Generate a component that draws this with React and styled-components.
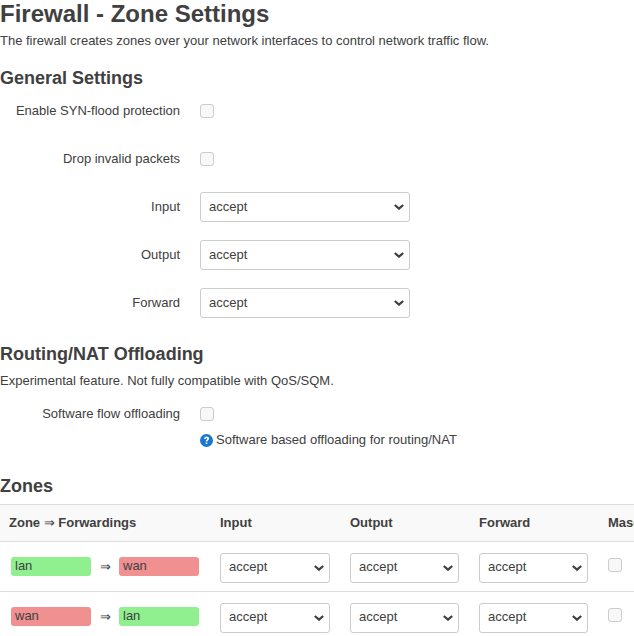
import React from "react";
import styled, { createGlobalStyle } from "styled-components";

const chevron =
  "data:image/svg+xml,%3Csvg xmlns='http://www.w3.org/2000/svg' width='10' height='6' viewBox='0 0 10 6'%3E%3Cpath d='M.8 1L5 4.6 9.2 1' fill='none' stroke='%23404040' stroke-width='2.3'/%3E%3C/svg%3E";

const Global = createGlobalStyle`
  html, body { margin: 0; padding: 0; background: #fff; overflow: hidden; }
  body { font-family: "Liberation Sans", Arial, sans-serif; font-size: 13px; color: #404040; }
`;
const Page = styled.div`
  width: 634px; height: 636px; overflow: hidden;
`;
const Title = styled.h2`
  margin: 0 0 5px; font-size: 24px; line-height: 27px; font-weight: 700; color: #404040;
`;
const Desc = styled.p`
  margin: 0; font-size: 13px; line-height: 18px; color: #404040;
`;
const Heading = styled.h3`
  margin: 0 0 ${p => p.$below || 0}px; font-size: 18px; line-height: 22px; font-weight: 700; color: #404040;
`;
const Section = styled.section`
  display: flex; flex-direction: column; padding-top: ${p => p.$top}px;
`;
const Rows = styled.div`
  display: flex; flex-direction: column; gap: 8px; padding-top: ${p => p.$top}px;
`;
const Row = styled.div`
  display: grid; grid-template-columns: 180px 1fr; column-gap: 20px; align-items: center;
  height: ${p => p.$h || 40}px;
`;
const Label = styled.label`
  text-align: right; font-size: 13px; line-height: 18px;
`;
const Check = styled.input.attrs({ type: "checkbox" })`
  appearance: none; display: block; margin: 0; width: 14px; height: 14px;
  border: 1px solid #ccc; border-radius: 3px; background: #f8f8f8;
`;
const Select = styled.select`
  appearance: none; display: block; box-sizing: border-box; width: ${p => p.$w}px; height: 30px;
  padding: 0 8px 2px; border: 1px solid #ccc; border-radius: 3px; color: #404040;
  background: #fff url("${chevron}") no-repeat right 5px center;
  font-family: "Liberation Sans", Arial, sans-serif; font-size: 13px;
`;
const CellSelect = styled(Select)`
  margin-top: 2px;
`;
const CellCheck = styled(Check)`
  margin-bottom: 4px;
`;
const HintRow = styled.div`
  display: flex; align-items: center; gap: 3px; padding-left: 200px; font-size: 13px; line-height: 18px;
`;
const Table = styled.table`
  border-collapse: collapse; table-layout: fixed; width: 740px; font-size: 13px;
`;
const Head = styled.th`
  box-sizing: border-box; width: ${p => p.$w}px; height: 37px; padding: 0 0 2px 9px;
  text-align: left; font-weight: 700; background: #f9f9f9;
  border-top: 1px solid #ddd; border-bottom: 1px solid #ddd;
`;
const HeadArrow = styled.span`
  font-weight: 400;
`;
const Cell = styled.td`
  box-sizing: border-box; height: 50px; padding: 0 0 0 ${p => p.$pad}px;
  border-bottom: 1px solid #ddd; vertical-align: middle;
`;
const Zones = styled.div`
  display: grid; grid-template-columns: 80px 28px 80px; align-items: center; font-size: 13px;
`;
const Arrow = styled.span`
  text-align: center;
`;
const Pill = styled.span`
  box-sizing: border-box; height: 19px; line-height: 18px; padding-left: 4px;
  border-radius: 3px; background: ${p => (p.$zone === "lan" ? "#90f090" : "#f09090")};
`;

const Hint = () => (
  <svg width="13" height="13" viewBox="0 0 13 13" aria-hidden="true">
    <circle cx="6.5" cy="6.5" r="6.5" fill="#1976d2" />
    <path d="M4 5c.1-1.5 1.1-2.4 2.6-2.4 1.5 0 2.5.9 2.5 2 0 1.7-1.8 1.7-1.8 3H5.7c0-2 1.6-2 1.6-2.9 0-.4-.3-.7-.8-.7-.5 0-.8.4-.9 1z" fill="#fff" />
    <rect x="5.7" y="8.5" width="1.6" height="1.6" fill="#fff" />
  </svg>
);
const Accept = ({ as: Comp = Select, w }) => (
  <Comp $w={w} defaultValue="accept">
    <option>accept</option>
    <option>drop</option>
    <option>reject</option>
  </Comp>
);
const ZoneRow = ({ from, to }) => (
  <tr>
    <Cell $pad={11}>
      <Zones>
        <Pill $zone={from}>{from}</Pill>
        <Arrow>⇒</Arrow>
        <Pill $zone={to}>{to}</Pill>
      </Zones>
    </Cell>
    <Cell $pad={9}><Accept as={CellSelect} w={110} /></Cell>
    <Cell $pad={9}><Accept as={CellSelect} w={109} /></Cell>
    <Cell $pad={9}><Accept as={CellSelect} w={109} /></Cell>
    <Cell $pad={9}><CellCheck /></Cell>
  </tr>
);

export default function App() {
  return (
    <Page>
      <Global />
      <Title>Firewall - Zone Settings</Title>
      <Desc>The firewall creates zones over your network interfaces to control network traffic flow.</Desc>
      <Section $top={17}>
        <Heading>General Settings</Heading>
        <Rows $top={2}>
          <Row><Label>Enable SYN-flood protection</Label><Check /></Row>
          <Row><Label>Drop invalid packets</Label><Check /></Row>
          <Row><Label>Input</Label><Accept w={210} /></Row>
          <Row><Label>Output</Label><Accept w={210} /></Row>
          <Row><Label>Forward</Label><Accept w={210} /></Row>
        </Rows>
      </Section>
      <Section $top={20}>
        <Heading $below={7}>Routing/NAT Offloading</Heading>
        <Desc>Experimental feature. Not fully compatible with QoS/SQM.</Desc>
      </Section>
      <Rows $top={7}>
        <Row $h={34}><Label>Software flow offloading</Label><Check /></Row>
      </Rows>
      <HintRow><Hint />Software based offloading for routing/NAT</HintRow>
      <Section $top={26}>
        <Heading $below={7}>Zones</Heading>
        <Table>
          <thead>
            <tr>
              <Head $w={211}>Zone <HeadArrow>⇒</HeadArrow> Forwardings</Head>
              <Head $w={130}>Input</Head>
              <Head $w={129}>Output</Head>
              <Head $w={129}>Forward</Head>
              <Head $w={141}>Masquerading</Head>
            </tr>
          </thead>
          <tbody>
            <ZoneRow from="lan" to="wan" />
            <ZoneRow from="wan" to="lan" />
          </tbody>
        </Table>
      </Section>
    </Page>
  );
}
